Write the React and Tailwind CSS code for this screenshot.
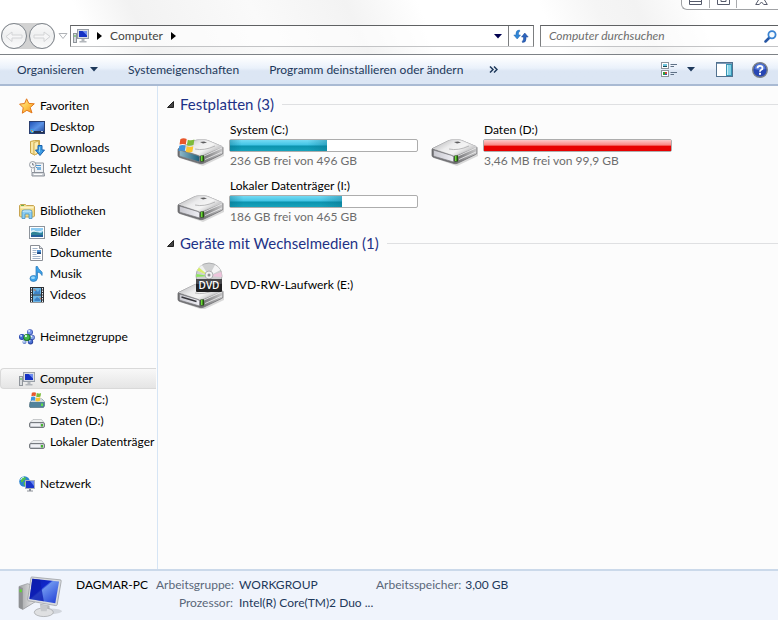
import { useState } from "react";

const sections = [
	{
		title: "Favoriten",
		icon: StarIcon,
		items: [
			{ name: "Desktop", icon: DesktopIcon },
			{ name: "Downloads", icon: DownloadsIcon },
			{ name: "Zuletzt besucht", icon: RecentIcon },
		],
	},
	{
		title: "Bibliotheken",
		icon: LibraryIcon,
		items: [
			{ name: "Bilder", icon: PictureIcon },
			{ name: "Dokumente", icon: DocumentIcon },
			{ name: "Musik", icon: MusicIcon },
			{ name: "Videos", icon: VideoIcon },
		],
	},
	{ title: "Heimnetzgruppe", icon: HomegroupIcon, items: [] },
	{
		title: "Computer",
		icon: ComputerIcon,
		items: [
			{ name: "System (C:)", icon: SystemDriveIcon },
			{ name: "Daten (D:)", icon: SmallDriveIcon },
			{ name: "Lokaler Datenträger", icon: SmallDriveIcon },
		],
	},
	{ title: "Netzwerk", icon: NetworkIcon, items: [] },
];

const drives = [
	{
		name: "System (C:)",
		info: "236 GB frei von 496 GB",
		used: 52,
		windows: true,
	},
	{ name: "Daten (D:)", info: "3,46 MB frei von 99,9 GB", used: 100 },
	{
		name: "Lokaler Datenträger (I:)",
		info: "186 GB frei von 465 GB",
		used: 60,
	},
];

function StarIcon() {
	return (
		<svg width="16" height="16" viewBox="0 0 16 16">
			<defs>
				<linearGradient id="star" x1="0" y1="0" x2="1" y2="1">
					<stop offset="0" stopColor="#fff3a0" />
					<stop offset="0.5" stopColor="#ffc94d" />
					<stop offset="1" stopColor="#f08a1c" />
				</linearGradient>
			</defs>
			<path
				d="M7.6.8l2.200 4.600 5.500.4-4.100 3.700 1.800 5.400-5.100-2.600-4.600 2.900.9-5.400L.6 6.100l5-.6z"
				fill="url(#star)"
				stroke="#e2771c"
				strokeWidth="1"
				strokeLinejoin="round"
			/>
		</svg>
	);
}

function DesktopIcon() {
	return (
		<svg width="16" height="16" viewBox="0 0 16 16">
			<defs>
				<linearGradient id="desk" x1="0" y1="0" x2="1" y2="1">
					<stop offset="0" stopColor="#1d4fb4" />
					<stop offset="0.5" stopColor="#5b93e6" />
					<stop offset="1" stopColor="#1b3f92" />
				</linearGradient>
			</defs>
			<rect x="0.5" y="2.5" width="15" height="12" fill="url(#desk)" stroke="#2a3f70" />
			<rect x="1" y="12" width="14" height="2" fill="#22314f" />
			<circle cx="3" cy="12" r="2" fill="#3fa4e8" />
			<rect x="2" y="11" width="1" height="1" fill="#f4722c" />
			<rect x="3" y="12" width="1" height="1" fill="#ffd84a" />
			<rect x="12" y="12" width="2" height="1" fill="#b9c7e2" />
		</svg>
	);
}

function DownloadsIcon() {
	return (
		<svg width="16" height="16" viewBox="0 0 16 16">
			<path d="M1.500 1.500l4-1h5v12l-5 2.500-4-2z" fill="#f3da84" stroke="#c9a44a" />
			<path d="M5 2.500L9.500 1v12L5 15z" fill="#fbecb2" stroke="#d3b25c" />
			<path d="M3 2v11" stroke="#fdf3cb" />
			<path
				d="M9 5.500h4V10h2.500L11 15.500 6.500 10H9z"
				fill="#3d9de4"
				stroke="#1b62ad"
			/>
			<path d="M10.500 7v5" stroke="#8dd0fa" />
		</svg>
	);
}

function RecentIcon() {
	return (
		<svg width="16" height="16" viewBox="0 0 16 16">
			<path d="M5 2h9.500v10h-9z" fill="#eef1f5" stroke="#93989f" />
			<path d="M7 4.500h5M7 6.500h5" stroke="#4a94cd" />
			<rect x="8" y="6" width="4" height="3" fill="#79b3de" />
			<path d="M3 11.500h12l.5 3.500H3z" fill="#d3d7dc" stroke="#8b9098" />
			<path d="M5 13.500h8" stroke="#fff" />
			<circle cx="3.700" cy="3.700" r="3.200" fill="#f5f7f9" stroke="#989da5" />
			<path d="M3.700 2v2h1.500" fill="none" stroke="#555b64" strokeWidth="0.8" />
			<path d="M2.500 7.500v4" stroke="#b6bac0" />
		</svg>
	);
}

function LibraryIcon() {
	return (
		<svg width="16" height="16" viewBox="0 0 16 16">
			<path d="M.5 2.500l1-1h5l1 1h7l1 1v9.500l-1 1H1.500l-1-1z" fill="#f1d983" stroke="#c8a552" />
			<path d="M1.500 4.500h13" stroke="#fcf3c7" strokeWidth="2" />
			<rect x="2" y="2" width="3" height="1" fill="#6cae4a" />
			<path
				d="M3 15.500V9q0-2 2-2h6q2 0 2 2v6.500h-3V11H6v4.500z"
				fill="#8ccdf1"
				stroke="#4690c2"
				strokeWidth="0.8"
			/>
			<path d="M4 9q0-1 1-1h6q1 0 1 1" fill="none" stroke="#d8f1fd" />
		</svg>
	);
}

function PictureIcon() {
	return (
		<svg width="16" height="16" viewBox="0 0 16 16">
			<rect x="0.5" y="2.500" width="15" height="12" fill="#fff" stroke="#8d949c" />
			<rect x="2" y="4" width="12" height="9" fill="#8ccbf2" />
			<path d="M2 8q4-3 7 0t5-1v6H2z" fill="#2f8397" />
			<path d="M2 7q3-2 5 0 3 1 7-1v1q-4 2-7 1T2 9z" fill="#e3f5fb" />
			<path d="M2 11h12v2H2z" fill="#255f9c" />
		</svg>
	);
}

function DocumentIcon() {
	return (
		<svg width="16" height="16" viewBox="0 0 16 16">
			<path d="M1.500.5h9l3 3v12h-12z" fill="#fff" stroke="#8b8f96" />
			<path d="M10.500.5v3h3" fill="#dfe4ea" stroke="#8b8f96" />
			<path
				d="M3.500 3.500h5M3.500 5.500h4M3.500 7.500h4M3.500 9.500h4M3.500 11.500h8M3.500 13.500h8"
				stroke="#a3b4c9"
			/>
			<rect x="8" y="5" width="4" height="4" fill="#4f93d6" />
			<path d="M8 7.500l2-.5 2 .5V9H8z" fill="#1d4780" />
		</svg>
	);
}

function MusicIcon() {
	return (
		<svg width="16" height="16" viewBox="0 0 16 16">
			<path
				d="M7 .5h1.500q.5 2.500 3 4t1.500 5q-1-3-4.500-3.500v6Q8 15.500 4.500 15.500T1 12.500t3.500-3q1.500 0 2.500.7z"
				fill="#3ba3ea"
				stroke="#2474b8"
				strokeWidth="0.7"
			/>
			<ellipse cx="4" cy="11.700" rx="2" ry="1.200" fill="#9bd9fb" />
		</svg>
	);
}

function VideoIcon() {
	return (
		<svg width="16" height="16" viewBox="0 0 16 16">
			<rect x="1" y="0" width="14" height="15.500" fill="#2c3036" />
			<path d="M2.500 1v14M13.500 1v14" stroke="#e9edf1" strokeDasharray="1.500 1" />
			<rect x="4" y="1" width="8" height="6.500" fill="#6cb6e6" />
			<rect x="4" y="8.500" width="8" height="6.500" fill="#6cb6e6" />
			<path d="M5 6l2-3 2 2 2-3v5H5zM5 13l3-3 3 2v2H6z" fill="#3d83c8" />
			<path d="M4 3l2-1 1 2zM10 10l2 1v2z" fill="#c4704e" />
		</svg>
	);
}

function Ball({ cx, cy, r, fill, dark }) {
	return (
		<g>
			<circle cx={cx} cy={cy} r={r} fill={dark} />
			<circle cx={cx - 0.2} cy={cy - 0.3} r={r * 0.75} fill={fill} />
			<circle cx={cx - r * 0.3} cy={cy - r * 0.4} r={r * 0.3} fill="#eef7ff" />
		</g>
	);
}

function HomegroupIcon() {
	return (
		<svg width="16" height="16" viewBox="0 0 16 16">
			<Ball cx={11} cy={3.2} r={3} fill="#7795e8" dark="#4059ba" />
			<Ball cx={3} cy={8} r={3} fill="#3f68d6" dark="#2340a5" />
			<Ball cx={13.2} cy={8.5} r={2.7} fill="#86a2e6" dark="#465fb4" />
			<Ball cx={11.5} cy={12.8} r={2.7} fill="#4a70d4" dark="#2a449e" />
			<Ball cx={5.5} cy={13} r={2} fill="#9ab8ec" dark="#5b76c2" />
			<Ball cx={8} cy={8.5} r={3.6} fill="#41b548" dark="#187423" />
		</svg>
	);
}

function ComputerIcon() {
	return (
		<svg width="16" height="16" viewBox="0 0 16 16">
			<rect x="0.500" y="5.500" width="3" height="9" fill="#d8dbde" stroke="#90959b" />
			<rect x="1.500" y="7" width="1" height="2" fill="#45b83c" />
			<rect x="4.500" y="1.500" width="11" height="9" fill="#d9dde3" stroke="#9aa0a8" />
			<rect x="6" y="3" width="8" height="6" fill="#1531c4" />
			<path d="M9.500 3H14v4.500z" fill="#6d8cf0" />
			<path d="M8.500 11h3v2h-3zM6.500 13h7v1.500h-7z" fill="#b3b7bc" />
		</svg>
	);
}

function WindowsFlag() {
	return (
		<g>
			<path d="M1.200 1.200Q4-.5 7 1L6.200 6Q3.500 4.700.5 6z" fill="#e8572b" />
			<path d="M8 1.500q3 1.200 6-.2l-.8 5q-3 1.300-6 .2z" fill="#7dbb3c" />
			<path d="M.3 7q3-1.200 5.700 0l-.8 5q-3-1.300-5.700 0z" fill="#3f94dd" />
			<path d="M7 7.500q3 1.200 6-.1l-.8 5q-3 1.300-6 .1z" fill="#fbc52f" />
		</g>
	);
}

function SystemDriveIcon() {
	return (
		<svg width="16" height="16" viewBox="0 0 16 16">
			<path d="M1 10l3-3h9l2.500 3v4l-1 1.500H1L.3 14z" fill="#51829b" stroke="#476472" strokeWidth="0.6" />
			<path d="M1 10l3-3h9l2.500 3z" fill="#d4d9dc" />
			<rect x="12" y="11.500" width="2" height="2.500" fill="#5fe04a" />
			<g transform="translate(2 0) scale(0.72)">
				<WindowsFlag />
			</g>
		</svg>
	);
}

function SmallDriveIcon() {
	return (
		<svg width="16" height="16" viewBox="0 0 16 16">
			<path d="M1 9.500L4 6.500h8.500l2.500 3z" fill="#eceeef" stroke="#b3b6b9" strokeWidth="0.7" />
			<rect x="0.500" y="9.500" width="15" height="5" rx="1.500" fill="#c7cacf" stroke="#777b80" />
			<rect x="2" y="10.500" width="9" height="2.500" fill="#f0f1f5" />
			<rect x="12" y="11" width="2" height="2.500" fill="#45b631" />
		</svg>
	);
}

function NetworkIcon() {
	return (
		<svg width="16" height="16" viewBox="0 0 16 16">
			<circle cx="5.500" cy="5.500" r="5.300" fill="#2b83d0" />
			<path d="M2 2q3-2 5 0 0 2-2 2-1 3-3 2zM5 6q3-1 4 1l-3 3q-2-1-1-4z" fill="#4fc04b" />
			<path d="M1.500 4q1-2.500 3.500-3" stroke="#d0effc" fill="none" />
			<rect x="6.500" y="4.500" width="9" height="8" fill="#1a35c9" stroke="#a9b0bb" />
			<path d="M11 5h4v5z" fill="#6787ef" />
			<path d="M10 13h2v1.500h-2zM8 14.500h6v1H8z" fill="#8b9097" />
		</svg>
	);
}

function DriveBody({ windows, slot }) {
	return (
		<g>
			<defs>
				<linearGradient id="driveTop" x1="0" y1="0" x2="1" y2="0.6">
					<stop offset="0" stopColor="#a9a9ab" />
					<stop offset="0.45" stopColor="#ececed" />
					<stop offset="0.7" stopColor="#f4f4f4" />
					<stop offset="1" stopColor="#b5b5b7" />
				</linearGradient>
				<linearGradient id="driveSide" x1="0" y1="0" x2="1" y2="0">
					<stop offset="0.5" stopColor="#69696b" />
					<stop offset="1" stopColor="#c9c9ca" />
				</linearGradient>
				<linearGradient id="driveFront" x1="0" y1="0" x2="1" y2="0">
					<stop offset="0" stopColor="#c9c9d0" />
					<stop offset="1" stopColor="#ededf3" />
				</linearGradient>
				<linearGradient id="driveBlue" x1="0" y1="0" x2="1" y2="0">
					<stop offset="0" stopColor="#8fb9c9" />
					<stop offset="1" stopColor="#1c5f7c" />
				</linearGradient>
			</defs>
			<path d="M3 20l23 8 21-10v-3L25 24z" fill="#000" opacity="0.14" />
			<path
				d="M1.500 10.500L17 3q2-1 4-1h7q2 0 4 1l13 5.500q1.500 1 1 2.500v4q0 1-1.500 1.500L27 25q-2 1-4 .5L3 19.500q-2-.5-2-2v-5.500q0-1 .5-1.500z"
				fill="url(#driveSide)"
				stroke="#6f6f72"
				strokeWidth="0.8"
			/>
			<path
				d="M2 10.500L17 3q2-1 4-1h7q2 0 4 1l13 5.500L26 17q-2 1-4 .5z"
				fill="url(#driveTop)"
				stroke="#d6d6d8"
				strokeWidth="0.6"
			/>
			<path
				d="M2.500 12L21 17.500q1.500.5 1.500 2v4.500L3.500 18.500q-1-.5-1-1.500z"
				fill={windows ? "url(#driveBlue)" : "url(#driveFront)"}
				stroke="#808084"
				strokeWidth="0.8"
			/>
			<path d="M27 18l18-8M28 21.500l17-7.500" stroke="#efeff0" strokeWidth="0.8" />
			<path d="M23 4l4-.5 3 1-4 1z" fill="#5c5c5e" />
			<path d="M18 11q9 2 20-3" fill="none" stroke="#a9a9ab" strokeWidth="0.8" />
			<rect x="23.500" y="17.500" width="3.500" height="6" fill="#23510f" />
			<rect x="24" y="18" width="1.500" height="5" fill="#6bdd35" />
			{slot && <path d="M4.500 15l15 4.500" stroke="#35353a" strokeWidth="1.500" />}
		</g>
	);
}

function DriveIcon({ windows }) {
	return (
		<svg width="48" height="48" viewBox="0 0 48 48" className="shrink-0">
			<g transform="translate(0 17)">
				<DriveBody windows={windows} />
			</g>
			{windows && (
				<g transform="translate(2 17) scale(1.1)">
					<WindowsFlag />
				</g>
			)}
		</svg>
	);
}

function DvdIcon() {
	return (
		<svg width="48" height="48" viewBox="0 0 48 48" className="shrink-0">
			<g transform="translate(0 21)">
				<DriveBody slot />
			</g>
			<circle cx="32" cy="15" r="13" fill="#cfd0d1" stroke="#a0a1a3" strokeWidth="0.8" />
			<path d="M32 15L20 9.500q1.500-3.500 5-5.500z" fill="#f0f1f1" />
			<path d="M32 15L19.500 13l-.3 3z" fill="#8be65c" />
			<path d="M32 15L22 6.500l-2 3z" fill="#d7ee6d" />
			<path d="M32 15l12.500-4 .3 5z" fill="#eec4dc" />
			<path d="M32 15l6-11q4 2 5.500 5z" fill="#f5f5f6" />
			<circle cx="32" cy="14" r="4" fill="#f1f1f2" stroke="#b0b1b3" />
			<circle cx="32" cy="14" r="1.500" fill="#8e8f92" />
			<rect x="19" y="18" width="26" height="13" rx="1" fill="#202022" />
			<rect x="19" y="18" width="26" height="5" rx="1" fill="#48484b" />
			<text
				x="32"
				y="28"
				textAnchor="middle"
				fill="#fff"
				fontSize="10"
				fontWeight="600"
				fontFamily="Open Sans, sans-serif">
				DVD
			</text>
		</svg>
	);
}

function BigComputerIcon() {
	return (
		<svg width="46" height="42" viewBox="0 0 48 44" className="shrink-0">
			<defs>
				<linearGradient id="screen" x1="0" y1="0" x2="1" y2="1">
					<stop offset="0" stopColor="#0d1fa6" />
					<stop offset="0.400" stopColor="#1027cb" />
					<stop offset="0.450" stopColor="#6c93ee" />
					<stop offset="1" stopColor="#1c39d4" />
				</linearGradient>
				<linearGradient id="tower" x1="0" y1="0" x2="1" y2="0">
					<stop offset="0" stopColor="#9fa1a4" />
					<stop offset="1" stopColor="#eeeeef" />
				</linearGradient>
			</defs>
			<ellipse cx="34" cy="37" rx="13" ry="3" fill="#000" opacity="0.12" />
			<path d="M2 11l9-3 8 3v16L6 35l-4-2z" fill="url(#tower)" stroke="#97999c" strokeWidth="0.8" />
			<path d="M2 11l4 1.500V35l-4-2z" fill="#8e9093" />
			<rect x="2.500" y="14" width="2.500" height="3" fill="#5fd635" />
			<path d="M24 29l10 2v6h-8z" fill="#b4b6b9" />
			<ellipse cx="28" cy="38" rx="10" ry="4.500" fill="#dfe0e2" stroke="#a6a8ab" strokeWidth="0.8" />
			<path d="M24 30l8 1-1 6h-6z" fill="#c7c9cc" />
			<path d="M14.500 2q0-1 1-1L45 4q1.500 0 1.200 1.500L42 30q-.3 1-1.500 1L12 26q-1-.2-1-1.500z" fill="#d9dbdf" stroke="#9a9ca0" strokeWidth="0.8" />
			<path d="M16 3l28 2.800L40 28.500 13 24z" fill="url(#screen)" />
			<path d="M16 3l8 1 4 22.500-15-2.500z" fill="#0c1cae" opacity="0.75" />
		</svg>
	);
}

function Caret({ color = "#1e395b" }) {
	return (
		<svg width="8" height="5" viewBox="0 0 8 5">
			<path d="M0 0h8L4 4.500z" fill={color} />
		</svg>
	);
}

function RightCaret() {
	return (
		<svg width="5" height="8" viewBox="0 0 5 8">
			<path d="M0 0l5 4-5 4z" fill="#000" />
		</svg>
	);
}

function HistoryButtons() {
	return (
		<div className="flex items-center gap-0.5 rounded-full bg-[#d2d2d2]">
			{["Zurück", "Vorwärts"].map((label, index) => (
				<button
					key={label}
					aria-label={label}
					className="size-[26px] rounded-full border border-[#7f858c] bg-linear-to-b from-[#fafafa] via-[#eeeff0] to-[#fbfbfb] flex items-center justify-center">
					<svg
						width="18"
						height="14"
						viewBox="0 0 18 14"
						className={index === 1 ? "-scale-x-100" : ""}>
						<path
							d="M1 7.500L7 3v3h10v3H7v3.500z"
							fill="#f6f6f7"
							stroke="#d3d4d6"
						/>
					</svg>
				</button>
			))}
		</div>
	);
}

function WindowButtons() {
	const button =
		"h-2 flex items-start justify-center border-r border-[#a9abae] last:border-r-0";
	return (
		<div className="flex h-[10px] rounded-bl-md border-b border-l border-[#a0a2a5] bg-white/70 overflow-hidden">
			<button aria-label="Minimieren" className={`${button} w-[28px]`}>
				<svg width="13" height="6" viewBox="0 0 13 6">
					<path d="M.5-1v5.500h12V-1M1 1.500h11" fill="#fff" stroke="#565b6b" />
				</svg>
			</button>
			<button aria-label="Maximieren" className={`${button} w-[27px]`}>
				<svg width="13" height="6" viewBox="0 0 13 6">
					<path d="M.5-1v5.500h12V-1" fill="#fff" stroke="#565b6b" />
					<path d="M4 0v1.500h5V0" fill="none" stroke="#565b6b" />
				</svg>
			</button>
			<button aria-label="Schließen" className={`${button} w-[41px] pl-2`}>
				<svg width="13" height="6" viewBox="0 0 13 6">
					<path
						d="M3.500 0L.7 4.500h3.600L6.500 2l2.200 2.500h3.600L9.500 0"
						fill="#fff"
						stroke="#565b6b"
					/>
				</svg>
			</button>
		</div>
	);
}

function AddressRow() {
	return (
		<div className="flex h-6 items-center">
			<div className="flex flex-1 items-center pl-px">
				<HistoryButtons />
				<button aria-label="Verlauf" className="ml-[3px] mr-0.5">
					<svg width="10" height="6" viewBox="0 0 10 6">
						<path d="M1 .5h8L5 5.500z" fill="#fff" stroke="#b0b3b7" />
					</svg>
				</button>
				<div className="flex h-[22px] flex-1 border border-t-[#5f6163] border-l-[#7c7e80] border-r-[#7c7e80] border-b-[#c3c4c6] bg-white/60">
					<div className="flex flex-1 items-center gap-2 pl-0.5">
						<ComputerIcon />
						<RightCaret />
						<button className="text-[#444]">Computer</button>
						<RightCaret />
					</div>
					<button aria-label="Adressliste" className="w-5 flex items-center justify-center">
						<Caret color="#00004f" />
					</button>
					<button
						aria-label="Aktualisieren"
						className="w-[25px] border-l border-[#7c7e80] flex items-center justify-center">
						<svg width="16" height="14" viewBox="0 0 16 14">
							<path
								d="M6.500 1Q3 1 3 4.500v1.500H.8L4.200 10l3.300-4H5.500V4.500Q5.500 3 6.800 2.200z"
								fill="#2f86d8"
								stroke="#2266ad"
								strokeWidth="0.500"
							/>
							<path
								d="M9.500 13.500q3.500 0 3.500-3.500V8h2.200L11.800 4 8.500 8h2v2q0 1.500-1.300 2.200z"
								fill="#2c64be"
								stroke="#1c4791"
								strokeWidth="0.500"
							/>
						</svg>
					</button>
				</div>
			</div>
			<label className="ml-1.5 flex h-[22px] w-[238px] items-center border border-r-0 border-t-[#5f6163] border-l-[#7c7e80] border-b-[#c3c4c6] bg-white/60 px-2 pr-px">
				<input
					type="text"
					aria-label="Computer durchsuchen"
					placeholder="Computer durchsuchen"
					className="min-w-0 flex-1 italic outline-none placeholder:text-[#6d6d6d]"
				/>
				<svg width="13" height="13" viewBox="0 0 13 13">
					<path d="M5.500 7.500L1.500 11.500" stroke="#2756a3" strokeWidth="2.500" strokeLinecap="round" />
					<circle cx="8" cy="4.800" r="3.600" fill="#f5fbff" stroke="#3a83d2" strokeWidth="1.800" />
				</svg>
			</label>
		</div>
	);
}

function Toolbar() {
	return (
		<div className="flex h-8 items-center border-t border-t-[#7e8287] border-b-2 border-b-[#a9bad3] bg-linear-to-b from-white from-5% via-[#eaf1fb] via-45% to-[#dce6f4] to-55% pl-[17px] pr-[10px] text-[#1e395b]">
			<button className="mr-[30px] flex items-center gap-1.5">
				Organisieren
				<Caret />
			</button>
			<button className="mr-[30px]">Systemeigenschaften</button>
			<button className="mr-[26px] whitespace-nowrap">
				Programm deinstallieren oder ändern
			</button>
			<button aria-label="Weitere Befehle">
				<svg width="9" height="7" viewBox="0 0 9 7">
					<path d="M1 .5l3 3-3 3M5 .5l3 3-3 3" fill="none" stroke="#1e395b" strokeWidth="1.500" />
				</svg>
			</button>
			<div className="ml-auto flex items-center">
				<button aria-label="Ansicht" className="flex items-center gap-2.5">
					<svg width="16" height="16" viewBox="0 0 16 16">
						<rect x="0.500" y="0.500" width="7" height="6" fill="#fff" stroke="#8e949c" />
						<rect x="2" y="2" width="4" height="3" fill="#6fc4dd" />
						<rect x="2" y="4" width="4" height="1" fill="#1b4b55" />
						<rect x="0.500" y="8.500" width="7" height="6" fill="#fff" stroke="#8e949c" />
						<rect x="2" y="10" width="2" height="3" fill="#2e9e3a" />
						<rect x="4" y="10" width="2" height="2" fill="#d1443b" />
						<rect x="4" y="12" width="2" height="1" fill="#2b4fc4" />
						<path d="M9.500 2.500H16M9.500 4.500H13M9.500 10.500H16M9.500 12.500H13" stroke="#5f7186" />
					</svg>
					<Caret />
				</button>
				<button aria-label="Vorschaufenster" className="ml-[21px]">
					<svg width="17" height="15" viewBox="0 0 17 15">
						<rect x="0.500" y="0.500" width="16" height="14" fill="#fff" stroke="#51718f" />
						<path d="M1 1.500h15" stroke="#7d9ab8" />
						<rect x="10.500" y="2.500" width="5" height="11" fill="#84d1e6" stroke="#3796b5" />
						<path d="M11.500 3v10" stroke="#c8eef7" />
					</svg>
				</button>
				<button aria-label="Hilfe" className="ml-[19px]">
					<svg width="16" height="16" viewBox="0 0 16 16">
						<circle cx="8" cy="8" r="7.300" fill="#2746b4" stroke="#7b8088" strokeWidth="1.400" />
						<path d="M2.500 7a5.500 5.500 0 0 1 11 0q-5 2-11 0z" fill="#5479d8" />
						<path
							d="M5.500 6.200Q5.500 3.800 8 3.800t2.500 2.200Q10.500 7.300 9 8q-1 .5-1 1.700"
							fill="none"
							stroke="#fff"
							strokeWidth="1.800"
						/>
						<rect x="7" y="10.800" width="2" height="2" fill="#fff" />
					</svg>
				</button>
			</div>
		</div>
	);
}

function Sidebar({ selected, onSelect }) {
	return (
		<nav className="flex w-[158px] shrink-0 flex-col gap-[21px] border-r border-[#d6e5f5] pt-[9px] pb-4">
			{sections.map((section) => (
				<ul key={section.title}>
					<li className="mr-px">
						<a
							href="#"
							onClick={() => onSelect(section.title)}
							className={
								selected === section.title
									? "flex h-[21px] items-center gap-[5px] rounded-l-sm border border-r-0 border-[#d9d9d9] bg-linear-to-b from-[#f8f8f8] to-[#e5e5e5] pl-[18px]"
									: "flex h-[21px] items-center gap-[5px] pl-[19px]"
							}>
							<section.icon />
							{section.title}
						</a>
					</li>
					{section.items.map((item) => (
						<li key={item.name}>
							<a
								href="#"
								className="flex h-[21px] items-center gap-[5px] pl-[29px] whitespace-nowrap [&>svg]:shrink-0">
								<item.icon />
								{item.name}
							</a>
						</li>
					))}
				</ul>
			))}
		</nav>
	);
}

function GroupHeader({ title, count }) {
	return (
		<h2 className="flex h-5 items-center text-[15px] text-[#1e3287]">
			<svg width="7" height="7" viewBox="0 0 7 7" className="mr-1.5">
				<path d="M6.500.5v6h-6z" fill="#444" stroke="#222" />
			</svg>
			{title} ({count})
			<span className="ml-2 h-px flex-1 bg-[#dfe0e2]" />
		</h2>
	);
}

function Drive({ drive }) {
	const full = drive.used >= 98;
	return (
		<li className="flex h-14 w-[254px] items-center gap-1">
			<DriveIcon windows={drive.windows} />
			<div className="w-[189px]">
				<p className="pl-px leading-4">{drive.name}</p>
				<div className="my-px h-[13px] rounded-xs border border-[#adadad] bg-white">
					<div
						className={
							full
								? "h-full bg-linear-to-b from-[#fbc8c8] via-[#fa8080] via-48% to-[#e80000] to-52%"
								: "h-full bg-[linear-gradient(90deg,#0a6f8a66,transparent_12%,transparent_80%,#0a6f8a66),linear-gradient(#74dbf4,#3fc3e4_48%,#0b92ad_52%,#17a3bc)]"
						}
						style={{ width: `${drive.used}%` }}
					/>
				</div>
				<p className="pl-px leading-4 text-[#6d6d6d]">{drive.info}</p>
			</div>
		</li>
	);
}

function DetailsPane() {
	return (
		<footer className="flex items-start border-t-2 border-[#cbd9ea] bg-[#f0f4fc] pt-[5px] pb-0.5 pl-[17px] leading-[18px] text-[#1e395b]">
			<BigComputerIcon />
			<p className="ml-[13px] w-20 text-black">DAGMAR-PC</p>
			<dl className="grid grid-cols-[77px_137px] gap-x-1.5 whitespace-nowrap">
				<dt className="text-right text-[#5a6779]">Arbeitsgruppe:</dt>
				<dd>WORKGROUP</dd>
				<dt className="text-right text-[#5a6779]">Prozessor:</dt>
				<dd>Intel(R) Core(TM)2 Duo ...</dd>
			</dl>
			<dl className="flex gap-1">
				<dt className="text-[#5a6779]">Arbeitsspeicher:</dt>
				<dd>3,00 GB</dd>
			</dl>
		</footer>
	);
}

export default function App() {
	const [selected, setSelected] = useState("Computer");

	return (
		<div className="flex min-h-screen flex-col bg-[#fcfcfc] font-[Lato,'Open_Sans',sans-serif] text-[12px] text-black">
			<header className="flex flex-col bg-[linear-gradient(65deg,#fff_0%,#fff_12%,#f2f2f2_19%,#fafafa_34%,#f3f3f3_46%,#fff_55%,#fff_70%,#f5f5f5_77%,#f3f3f3_82%,#fff_90%)] pb-[6px]">
				<div className="flex h-6 items-start justify-end">
					<WindowButtons />
				</div>
				<AddressRow />
			</header>
			<Toolbar />
			<div className="flex flex-1">
				<Sidebar selected={selected} onSelect={setSelected} />
				<main className="min-w-0 flex-1 pt-2 pl-[9px]">
					<GroupHeader title="Festplatten" count={3} />
					<ul className="flex flex-wrap pt-[3px] pl-[10px] pb-1">
						{drives.map((drive) => (
							<Drive key={drive.name} drive={drive} />
						))}
					</ul>
					<GroupHeader title="Geräte mit Wechselmedien" count={1} />
					<ul className="pt-1 pl-[10px]">
						<li className="flex h-14 items-center gap-[5px]">
							<DvdIcon />
							DVD-RW-Laufwerk (E:)
						</li>
					</ul>
				</main>
			</div>
			<DetailsPane />
		</div>
	);
}
